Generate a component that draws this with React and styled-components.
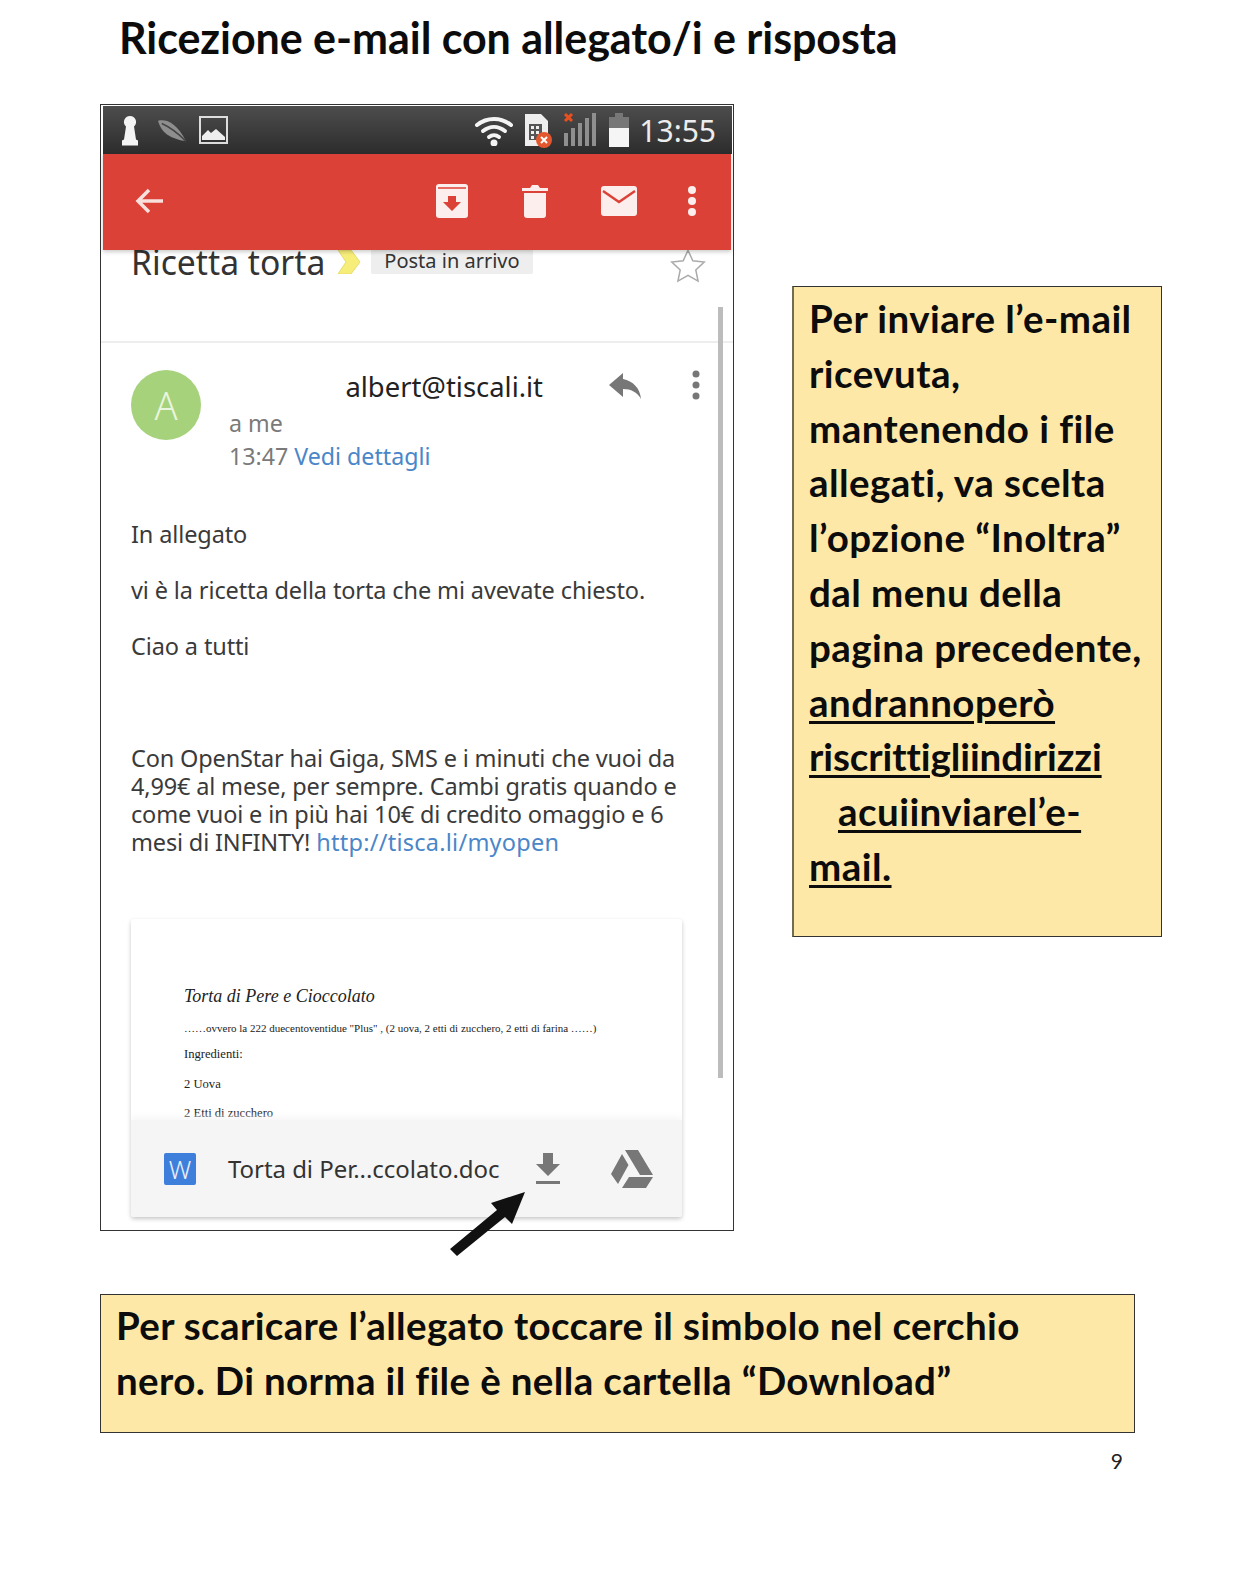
import React from 'react';
import styled, { createGlobalStyle } from 'styled-components';

const Global = createGlobalStyle`
  html, body { margin: 0; padding: 0; background: #fff; }
  * { box-sizing: border-box; }
`;

const Page = styled.div`
  width: 1242px;
  height: 1575px;
  padding: 13px 0 0 100px;
  font-family: Lato, "Liberation Sans", sans-serif;
  font-variant-ligatures: none;
  color: #0c0c0c;
  overflow: hidden;
`;

const Title = styled.h1`
  margin: 0 0 41px 19px;
  font-size: 43px;
  line-height: 50px;
  font-weight: 700;
  letter-spacing: -0.05px;
`;

const Middle = styled.div`
  display: flex;
  align-items: flex-start;
  gap: 59px;
`;

const Phone = styled.div`
  position: relative;
  width: 634px;
  height: 1127px;
  border: 1px solid #333;
  background: #fff;
  font-family: "Noto Sans", Roboto, sans-serif;
  color: #3a3a3a;
`;

const StatusBar = styled.div`
  height: 48px;
  margin: 1px 1px 0 2px;
  padding: 0 16px 0 18px;
  display: flex;
  align-items: center;
  background: linear-gradient(#4d4d4d, #2c2c2c);
  color: #eee;
`;

const Clock = styled.span`
  margin-left: 9px;
  font-size: 30px;
  font-weight: 400;
  font-family: "Noto Sans", sans-serif;
  color: #ededed;
`;

const Spacer = styled.div`
  flex: 1;
`;

const RedBar = styled.div`
  position: relative;
  z-index: 1;
  height: 96px;
  margin: 0 2px 0 2px;
  padding: 0 34px 2px 32px;
  display: flex;
  align-items: center;
  background: #dc4137;
  box-shadow: 0 2px 4px rgba(0, 0, 0, .2);
`;

const ToolIcon = styled.svg`
  display: block;
  flex: none;
  margin-left: ${p => p.$gap || 0}px;
  margin-bottom: ${p => p.$lift || 0}px;
`;

const Subject = styled.div`
  height: 93px;
  padding: 0 0 0 30px;
  display: flex;
  align-items: flex-start;
  border-bottom: 2px solid #eee;
  overflow: hidden;
`;

const SubjectText = styled.div`
  margin-top: -8px;
  font-size: 33.7px;
  line-height: 40px;
  color: #333;
`;

const Chevron = styled.svg`
  margin: 0 10px 0 12px;
  flex: none;
`;

const Label = styled.div`
  margin-top: -1px;
  height: 25px;
  padding: 0 13px;
  font-size: 20px;
  line-height: 23px;
  background: #eeeeee;
  border-radius: 2px;
  color: #333;
`;

const Star = styled.svg`
  margin: -2px 0 0 137px;
  flex: none;
`;

const Head = styled.div`
  height: 112px;
  padding: 27px 30px 0 30px;
  display: flex;
  align-items: flex-start;
`;

const Avatar = styled.div`
  width: 70px;
  height: 70px;
  border-radius: 50%;
  background: #a5d27a;
  color: #e9f5dc;
  font-size: 38px;
  font-weight: 300;
  line-height: 70px;
  text-align: center;
  flex: none;
`;

const HeadText = styled.div`
  margin-left: 28px;
  flex: 1;
`;

const SenderRow = styled.div`
  height: 34px;
  margin-bottom: 3px;
  display: flex;
  align-items: center;
`;

const Sender = styled.div`
  width: 314px;
  text-align: right;
  font-size: 27.4px;
  line-height: 34px;
  color: #222;
  flex: none;
`;

const MetaLine = styled.div`
  font-size: 23.2px;
  line-height: 33px;
  color: #7a7a7a;
`;

const Link = styled.span`
  color: #4a86c8;
`;

const UrlLink = styled(Link)`
  letter-spacing: .25px;
`;

const Body = styled.div`
  padding: 65px 40px 0 30px;
`;

const Para = styled.p`
  margin: 0 0 ${p => p.$after ?? 28}px;
  font-size: 23.5px;
  line-height: 28px;
  letter-spacing: -0.12px;
  color: #3a3a3a;
`;

const AdPara = styled(Para)`
  margin-top: 84px;
  letter-spacing: -0.16px;
`;

const Card = styled.div`
  position: relative;
  margin: 63px 0 0 30px;
  width: 551px;
  height: 298px;
  background: #fff;
  border-radius: 3px;
  box-shadow: 0 2px 4px rgba(0, 0, 0, .22);
  overflow: hidden;
`;

const Doc = styled.div`
  padding: 65px 0 0 53px;
  font-family: "Liberation Serif", serif;
  color: #222;
`;

const DocTitle = styled.div`
  font-size: 18px;
  line-height: 24px;
  font-style: italic;
  margin-bottom: 13px;
`;

const DocSub = styled.div`
  font-size: 11px;
  line-height: 14px;
  margin-bottom: 11px;
`;

const DocLine = styled.div`
  font-size: 12.6px;
  line-height: 16px;
  margin-bottom: 13.5px;
`;

const Attach = styled.div`
  position: absolute;
  left: 0;
  right: 0;
  bottom: 0;
  height: 97px;
  padding: 0 29px 0 33px;
  display: flex;
  align-items: center;
  background: #f5f5f5;
  box-shadow: 0 -3px 6px rgba(245, 245, 245, .9);
`;

const WordBox = styled.div`
  width: 32px;
  height: 32px;
  border-radius: 2px;
  background: #3f7fdc;
  color: #e9f1fb;
  font-size: 25px;
  line-height: 32px;
  text-align: center;
  font-weight: 300;
  flex: none;
`;

const FileName = styled.div`
  margin-left: 32px;
  font-size: 24px;
  color: #333;
  letter-spacing: -0.05px;
  white-space: nowrap;
  flex: 1;
`;

const Scrollbar = styled.div`
  position: absolute;
  left: 617px;
  top: 202px;
  width: 5px;
  height: 771px;
  background: #bcbcbc;
`;

const Arrow = styled.svg`
  position: absolute;
  left: 346px;
  top: 1085px;
`;

const Note = styled.div`
  background: #fde8a8;
  border: 1px solid #333;
  font-weight: 700;
  font-size: 38.5px;
  color: #0c0c0c;
`;

const SideNote = styled(Note)`
  width: 370px;
  height: 651px;
  margin: 182px 0 0 -1px;
  padding: 4px 0 0 15px;
  line-height: 54.8px;
  letter-spacing: .45px;
  border-left: 2px solid #6f6f50;
`;

const BottomNote = styled(Note)`
  width: 1035px;
  height: 139px;
  margin-top: 63px;
  padding: 3px 0 0 15px;
  line-height: 55px;
  letter-spacing: .36px;
`;

const Under = styled.span`
  text-decoration: underline;
  text-decoration-thickness: 3px;
  text-underline-offset: 4px;
  letter-spacing: ${p => (p.$tight ? '-0.08px' : 'inherit')};
`;

const Indent = styled.span`
  padding-left: 29px;
`;

const PageNo = styled.div`
  width: 1023px;
  margin-top: 15px;
  text-align: right;
  font-size: 21px;
  line-height: 26px;
  font-weight: 400;
  color: #222;
`;

const App = () => (
  <>
    <Global />
    <Page>
      <Title>Ricezione e-mail con allegato/i e risposta</Title>
      <Middle>
        <Phone>
          <StatusBar>
            <ToolIcon width="18" height="31" viewBox="0 0 18 31"><path d="M9 1a6 6 0 0 1 4 10.500l2 13 2 1v5H1v-5l2-1 2-13A6 6 0 0 1 9 1z" fill="#f4f4f4" /></ToolIcon>
            <ToolIcon $gap={17} width="32" height="26" viewBox="0 0 34 28"><path d="M2 4c10-2 20 3 30 22C20 24 6 20 2 4z" fill="#8e8e8e" /><path d="M6 7c9 4 17 10 26 19" stroke="#444" strokeWidth="1.500" fill="none" /></ToolIcon>
            <ToolIcon $gap={11} width="29" height="28" viewBox="0 0 29 28"><rect x="1" y="1" width="27" height="26" fill="none" stroke="#ddd" strokeWidth="2" /><path d="M3 24v-4l6-6 3 3 5-4 9 8v3z" fill="#eee" /></ToolIcon>
            <Spacer />
            <ToolIcon width="40" height="32" viewBox="0 0 40 32" fill="none" stroke="#f4f4f4" strokeWidth="4" strokeLinecap="round"><path d="M3 11c10-8 24-8 34 0" /><path d="M9 17c7-5.500 15-5.500 22 0" /><path d="M15 23c3-2.500 7-2.500 10 0" /><circle cx="20" cy="29" r="1.500" fill="#f4f4f4" /></ToolIcon>
            <ToolIcon $gap={10} width="28" height="35" viewBox="0 0 28 35"><path d="M1 1h16l7 7v25H1z" fill="#eee" /><path d="M5 11h13v16H5z" fill="#555" /><path d="M7 13h3v3H7zM12 13h3v3h-3zM7 18h3v3H7zM12 18h3v3h-3zM7 23h3v3H7z" fill="#eee" /><circle cx="20" cy="27" r="8" fill="#e4572e" /><path d="M17 24l6 6M23 24l-6 6" stroke="#fff" strokeWidth="2" /></ToolIcon>
            <ToolIcon $gap={11} width="34" height="36" viewBox="0 0 34 36"><path d="M1 21h4v13H1zM8 16h4v18H8zM15 11h4v23h-4zM22 6h4v28h-4zM29 1h4v33h-4z" fill="#8f8f8f" /><path d="M2 2l7 7M9 2L2 9" stroke="#e8501f" strokeWidth="3" /></ToolIcon>
            <ToolIcon $gap={11} width="22" height="36" viewBox="0 0 22 36"><path d="M7 1h8v4h6v11H1V5h6z" fill="#777" /><path d="M1 16h20v19H1z" fill="#f5f5f5" /></ToolIcon>
            <Clock>13:55</Clock>
          </StatusBar>
          <RedBar>
            <ToolIcon width="30" height="30" viewBox="0 0 30 30" fill="none" stroke="#f8e0dd" strokeWidth="3.500"><path d="M28 15H4M14 4L3 15l11 11" /></ToolIcon>
            <Spacer />
            <ToolIcon width="34" height="34" viewBox="0 0 34 34"><path d="M4 0h26a3 3 0 0 1 3 3v28a3 3 0 0 1-3 3H4a3 3 0 0 1-3-3V3a3 3 0 0 1 3-3z" fill="#fbeeec" /><path d="M3 4h28" stroke="#dc4137" strokeWidth="1.500" /><path d="M13 12h8v6h5l-9 9-9-9h5z" fill="#dc4137" /></ToolIcon>
            <ToolIcon $gap={53} width="26" height="34" viewBox="0 0 26 34"><path d="M0 4h8l2-3h6l2 3h8v3H0zM2 9h22v22a3 3 0 0 1-3 3H5a3 3 0 0 1-3-3z" fill="#fbeeec" /></ToolIcon>
            <ToolIcon $gap={53} width="36" height="30" viewBox="0 0 36 30"><rect width="36" height="30" rx="3" fill="#fbeeec" /><path d="M2 5l16 11L34 5" stroke="#dc4137" strokeWidth="2.500" fill="none" /></ToolIcon>
            <ToolIcon $gap={50} width="10" height="32" viewBox="0 0 10 32" fill="#fbeeec"><circle cx="5" cy="5" r="4" /><circle cx="5" cy="16" r="4" /><circle cx="5" cy="27" r="4" /></ToolIcon>
          </RedBar>
          <Subject>
            <SubjectText>Ricetta torta</SubjectText>
            <Chevron width="24" height="24" viewBox="0 0 24 24"><path d="M1 0h13l9 12-9 12H1l8-12z" fill="#f7ee7a" stroke="#e8dc6a" /></Chevron>
            <Label>Posta in arrivo</Label>
            <Star width="36" height="36" viewBox="0 0 24 24" fill="none" stroke="#aaa" strokeWidth="1"><path d="M12 1.500l3.200 7 7.600.9-5.600 5.200 1.500 7.500L12 18.300l-6.700 3.800 1.500-7.500L1.200 9.400l7.600-.9z" /></Star>
          </Subject>
          <Head>
            <Avatar>A</Avatar>
            <HeadText>
              <SenderRow>
                <Sender>albert@tiscali.it</Sender>
                <ToolIcon $gap={66} width="34" height="28" viewBox="0 0 34 28"><path d="M14 0L0 12l14 12v-8c8 0 14 3 18 10-1-11-8-18-18-20z" fill="#777" /></ToolIcon>
                <ToolIcon $gap={49} $lift={4} width="8" height="30" viewBox="0 0 8 30" fill="#777"><circle cx="4" cy="4" r="3.500" /><circle cx="4" cy="15" r="3.500" /><circle cx="4" cy="26" r="3.500" /></ToolIcon>
              </SenderRow>
              <MetaLine>a me</MetaLine>
              <MetaLine>13:47 <Link>Vedi dettagli</Link></MetaLine>
            </HeadText>
          </Head>
          <Body>
            <Para>In allegato</Para>
            <Para>vi è la ricetta della torta che mi avevate chiesto.</Para>
            <Para>Ciao a tutti</Para>
            <AdPara $after={0}>Con OpenStar hai Giga, SMS e i minuti che vuoi da 4,99€ al mese, per sempre. Cambi gratis quando e come vuoi e in più hai 10€ di credito omaggio e 6 mesi di INFINTY! <UrlLink>http://tisca.li/myopen</UrlLink></AdPara>
          </Body>
          <Card>
            <Doc>
              <DocTitle>Torta di  Pere e Cioccolato</DocTitle>
              <DocSub>……ovvero la 222 duecentoventidue "Plus" , (2 uova, 2 etti di zucchero, 2 etti di farina ……)</DocSub>
              <DocLine>Ingredienti:</DocLine>
              <DocLine>2 Uova</DocLine>
              <DocLine>2 Etti di zucchero</DocLine>
            </Doc>
            <Attach>
              <WordBox>W</WordBox>
              <FileName>Torta di Per...ccolato.doc</FileName>
              <ToolIcon width="26" height="32" viewBox="0 0 26 32" fill="#777"><path d="M8 0h10v11h7L13 23 1 11h7zM1 28h24v3H1z" /></ToolIcon>
              <ToolIcon $gap={50} width="42" height="38" viewBox="0 0 42 38" fill="#777"><path d="M14 0h13l15 25h-13zM11 4l6.500 11L7 34 0 24zM18 27h24l-7 11H11z" /></ToolIcon>
            </Attach>
          </Card>
          <Scrollbar />
          <Arrow width="80" height="66" viewBox="0 0 80 66"><path d="M3 59L50 20l-6-7L78 2 65 34l-7-7-48 39z" fill="#111" /></Arrow>
        </Phone>
        <SideNote>
          Per inviare l’e-mail<br />
          ricevuta,<br />
          mantenendo i file<br />
          allegati, va scelta<br />
          l’opzione “Inoltra”<br />
          dal menu della<br />
          pagina precedente,<br />
          <Under>andrannoperò</Under><br />
          <Under $tight>riscrittigliindirizzi</Under><br />
          <Indent><Under>acuiinviarel’e-</Under></Indent><br />
          <Under>mail.</Under>
        </SideNote>
      </Middle>
      <BottomNote>
        Per scaricare l’allegato toccare il simbolo nel cerchio<br />
        nero. Di norma il file è nella cartella “Download”
      </BottomNote>
      <PageNo>9</PageNo>
    </Page>
  </>
);

export default App;
